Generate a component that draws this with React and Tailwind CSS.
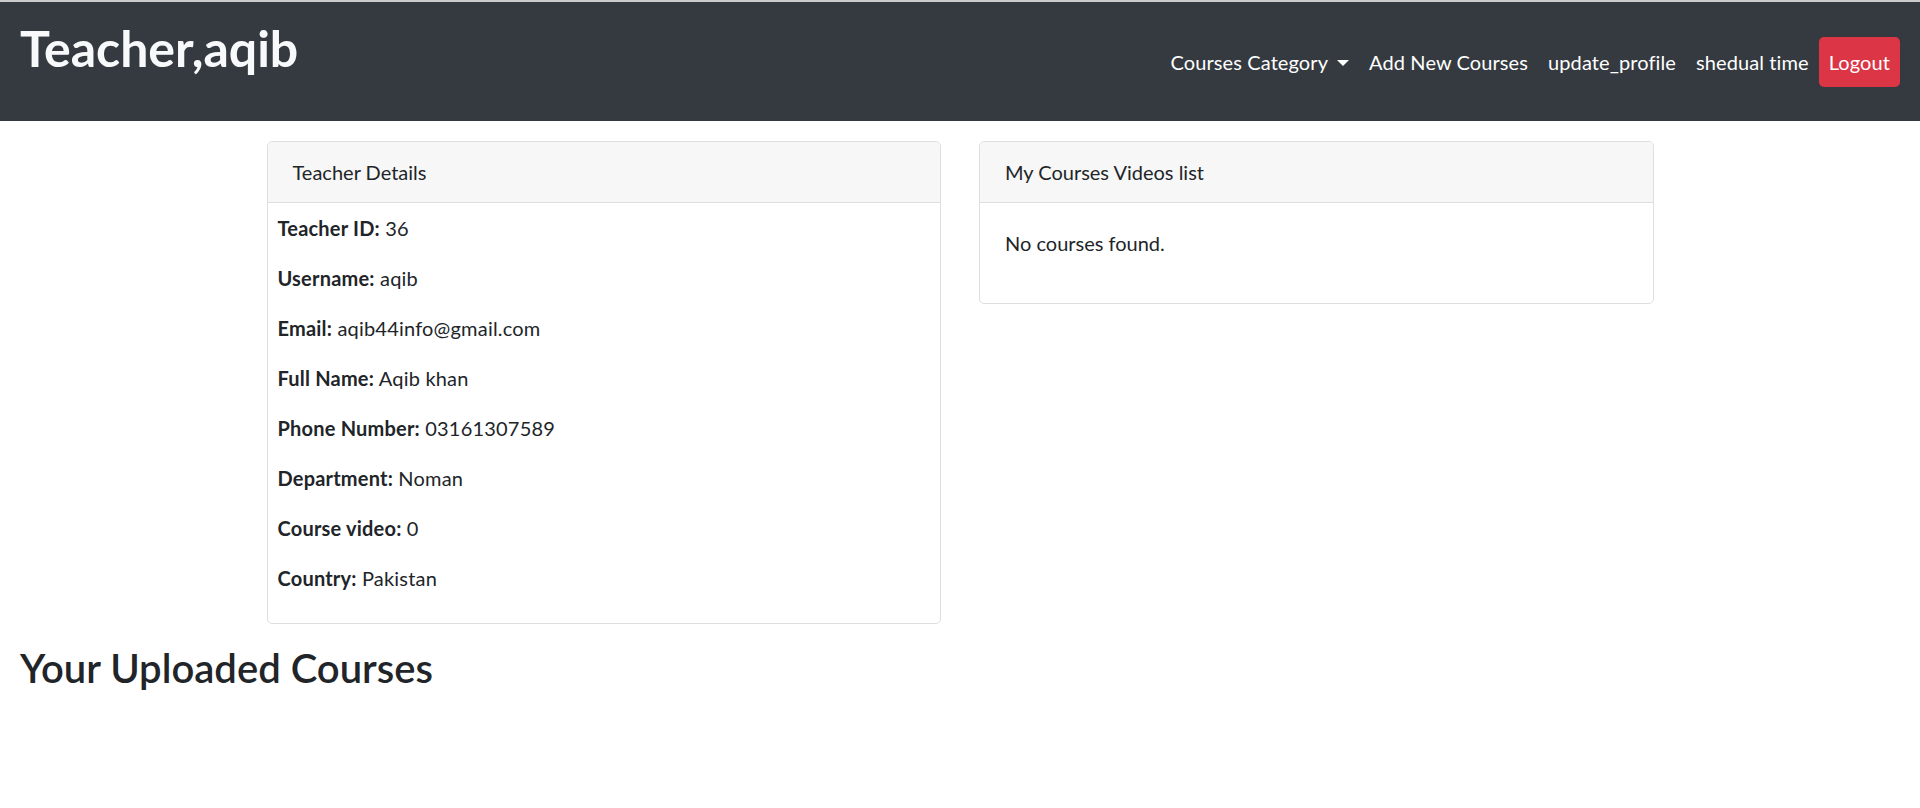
export default function App() {
  const rows = [
    ["Teacher ID:", "36"],
    ["Username:", "aqib"],
    ["Email:", "aqib44info@gmail.com"],
    ["Full Name:", "Aqib khan"],
    ["Phone Number:", "03161307589"],
    ["Department:", "Noman"],
    ["Course video:", "0"],
    ["Country:", "Pakistan"],
  ];
  return (
    <div className="min-h-screen bg-white text-[#212529] font-['Lato','Segoe_UI',sans-serif]">
      <div className="h-[2px] bg-[#cccccc]" />
      <nav className="h-[119px] bg-[#343a40] px-5 flex items-start justify-between">
        <h1 className="pt-4 text-[50px] leading-[60px] font-bold text-[#f8f9fa]">Teacher,aqib</h1>
        <ul className="self-center flex items-center text-[20px] leading-[30px] text-white tracking-[0.1px]">
          <li className="px-[10px] py-[10px] flex items-center">
            Courses Category
            <span className="ml-[9px] mt-[2px] w-0 h-0 border-t-[6px] border-t-white border-x-[6px] border-x-transparent" />
          </li>
          <li className="px-[10px] py-[10px]">Add New Courses</li>
          <li className="px-[10px] py-[10px]">update_profile</li>
          <li className="px-[10px] py-[10px]">shedual time</li>
          <li className="px-[10px] py-[10px] bg-[#dc3545] rounded-[5px]">Logout</li>
        </ul>
      </nav>
      <div className="w-[1387px] mx-auto mt-5 flex items-start gap-[38px]">
        <div className="w-[675px] border border-[#dfdfdf] rounded-[5px] overflow-hidden">
          <div className="bg-[#f7f7f7] border-b border-[#dfdfdf] px-[25px] py-[15px] text-[20px] leading-[30px]">
            Teacher Details
          </div>
          <div className="p-[10px] text-[20px] leading-[30px] tracking-[0.2px]">
            {rows.map(([k, v]) => (
              <p key={k} className="mb-5">
                <b className="font-bold">{k}</b> {v}
              </p>
            ))}
          </div>
        </div>
        <div className="w-[675px] border border-[#dfdfdf] rounded-[5px] overflow-hidden">
          <div className="bg-[#f7f7f7] border-b border-[#dfdfdf] px-[25px] py-[15px] text-[20px] leading-[30px]">
            My Courses Videos list
          </div>
          <div className="p-[25px] text-[20px] leading-[30px]">
            <p className="mb-5">No courses found.</p>
          </div>
        </div>
      </div>
      <h2 className="mt-[20px] px-5 text-[40px] leading-[48px] font-semibold">Your Uploaded Courses</h2>
    </div>
  );
}
